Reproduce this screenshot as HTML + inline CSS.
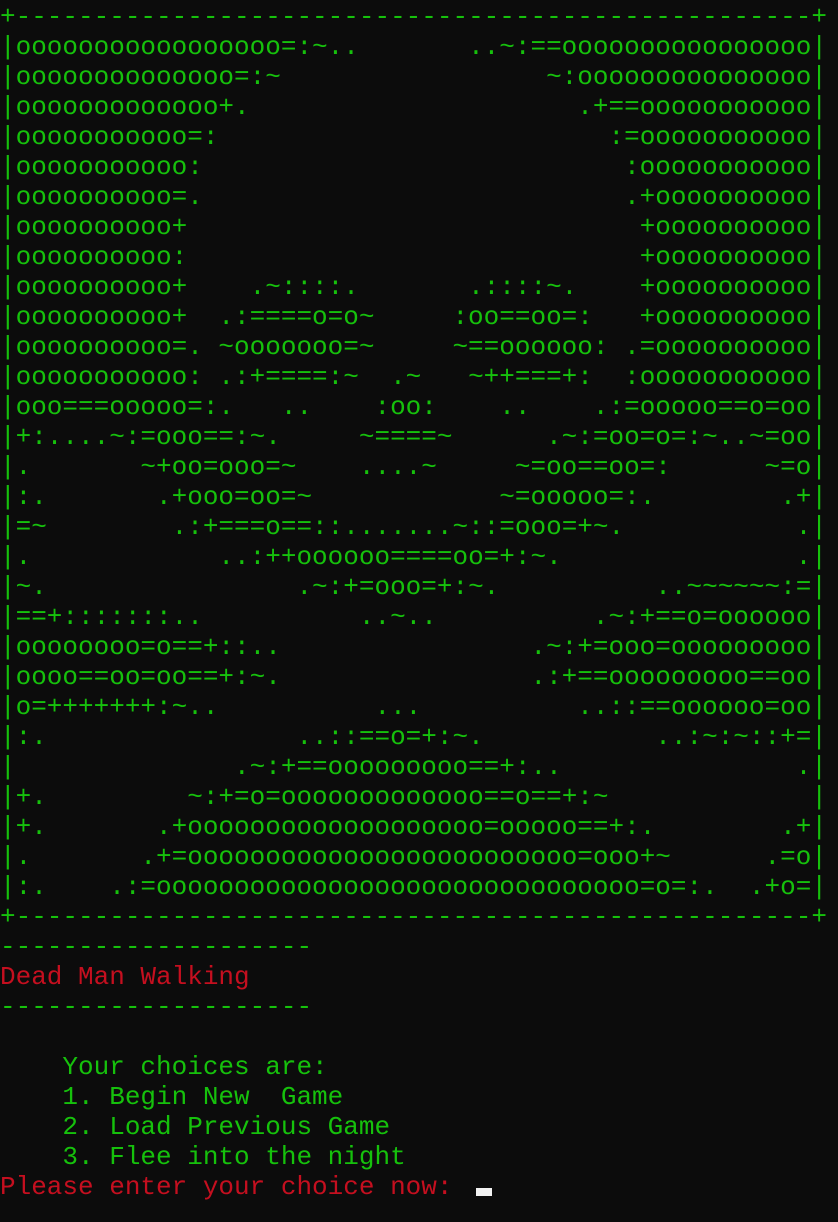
<!DOCTYPE html>
<html><head><meta charset="utf-8"><style>
html,body{margin:0;padding:0;background:#0c0c0c;}
body{width:838px;height:1222px;overflow:hidden;position:relative;}
.t{position:absolute;left:0;top:2px;font-family:"Liberation Mono",monospace;font-size:26px;line-height:30px;color:#16c10c;}
.r{position:relative;width:53ch;height:30px;white-space:pre;}
.r b{font-weight:normal;position:absolute;right:0;top:0;}
.red{color:#c50f1f;}
.cur{position:absolute;left:476px;top:1188px;width:16px;height:8px;background:#f2f2f2;}
</style></head><body>
<div class="t">
<div class="r"><span>+---------------------------------------------------</span><b>+</b></div>
<div class="r"><span>|ooooooooooooooooo=:~..</span><b>..~:==oooooooooooooooo|</b></div>
<div class="r"><span>|oooooooooooooo=:~</span><b>~:ooooooooooooooo|</b></div>
<div class="r"><span>|ooooooooooooo+.</span><b>.+==ooooooooooo|</b></div>
<div class="r"><span>|ooooooooooo=:</span><b>:=ooooooooooo|</b></div>
<div class="r"><span>|ooooooooooo:</span><b>:ooooooooooo|</b></div>
<div class="r"><span>|oooooooooo=.</span><b>.+oooooooooo|</b></div>
<div class="r"><span>|oooooooooo+</span><b>+oooooooooo|</b></div>
<div class="r"><span>|oooooooooo:</span><b>+oooooooooo|</b></div>
<div class="r"><span>|oooooooooo+    .~::::.</span><b>.::::~.    +oooooooooo|</b></div>
<div class="r"><span>|oooooooooo+  .:====o=o~</span><b>:oo==oo=:   +oooooooooo|</b></div>
<div class="r"><span>|oooooooooo=. ~ooooooo=~</span><b>~==oooooo: .=oooooooooo|</b></div>
<div class="r"><span>|ooooooooooo: .:+====:~  .~</span><b>~++===+:  :ooooooooooo|</b></div>
<div class="r"><span>|ooo===ooooo=:.   ..    :oo:</span><b>..    .:=ooooo==o=oo|</b></div>
<div class="r"><span>|+:....~:=ooo==:~.     ~====~</span><b>.~:=oo=o=:~..~=oo|</b></div>
<div class="r"><span>|.       ~+oo=ooo=~    ....~</span><b>~=oo==oo=:      ~=o|</b></div>
<div class="r"><span>|:.       .+ooo=oo=~</span><b>~=ooooo=:.        .+|</b></div>
<div class="r"><span>|=~        .:+===o==::.......~::=ooo=+~.</span><b>.|</b></div>
<div class="r"><span>|.            ..:++oooooo====oo=+:~.</span><b>.|</b></div>
<div class="r"><span>|~.                .~:+=ooo=+:~.</span><b>..~~~~~~:=|</b></div>
<div class="r"><span>|==+:::::::..          ..~..</span><b>.~:+==o=oooooo|</b></div>
<div class="r"><span>|oooooooo=o==+::..</span><b>.~:+=ooo=ooooooooo|</b></div>
<div class="r"><span>|oooo==oo=oo==+:~.</span><b>.:+==ooooooooo==oo|</b></div>
<div class="r"><span>|o=+++++++:~..          ...</span><b>..::==oooooo=oo|</b></div>
<div class="r"><span>|:.                ..::==o=+:~.</span><b>..:~:~::+=|</b></div>
<div class="r"><span>|              .~:+==ooooooooo==+:..</span><b>.|</b></div>
<div class="r"><span>|+.         ~:+=o=ooooooooooooo==o==+:~</span><b>|</b></div>
<div class="r"><span>|+.       .+ooooooooooooooooooo=ooooo==+:.</span><b>.+|</b></div>
<div class="r"><span>|.       .+=ooooooooooooooooooooooooo=ooo+~</span><b>.=o|</b></div>
<div class="r"><span>|:.    .:=ooooooooooooooooooooooooooooooo=o=:.</span><b>.+o=|</b></div>
<div class="r"><span>+---------------------------------------------------</span><b>+</b></div>
<div class="r">--------------------</div>
<div class="r red">Dead Man Walking</div>
<div class="r">--------------------</div>
<div class="r"> </div>
<div class="r">    Your choices are:</div>
<div class="r">    1. Begin New  Game</div>
<div class="r">    2. Load Previous Game</div>
<div class="r">    3. Flee into the night</div>
<div class="r red">Please enter your choice now: </div>
</div>
<div class="cur"></div>
</body></html>
